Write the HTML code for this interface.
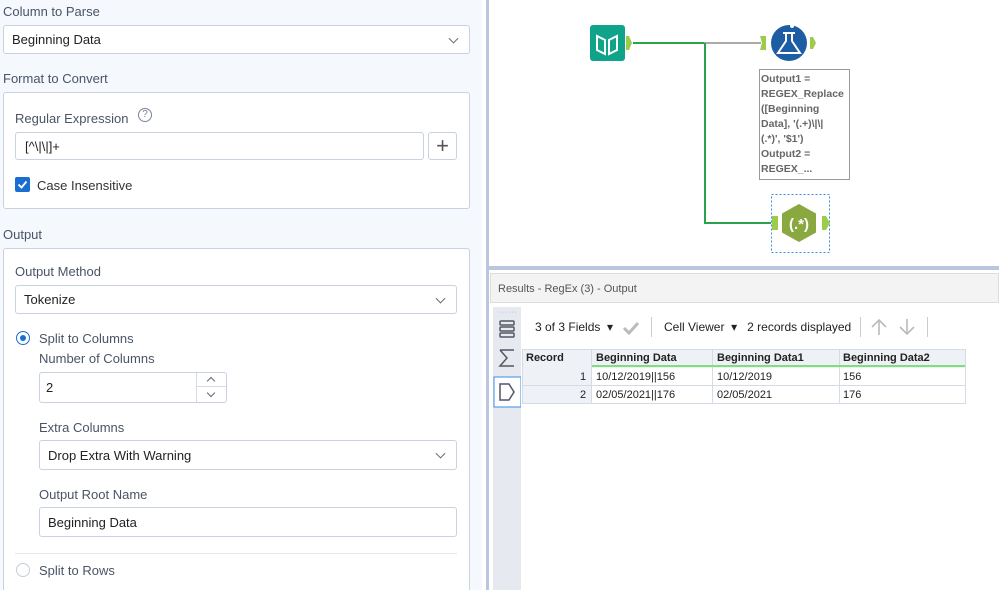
<!DOCTYPE html>
<html><head><meta charset="utf-8"><style>
*{box-sizing:border-box;margin:0;padding:0}
html,body{width:999px;height:590px;overflow:hidden}
body{font-family:"Liberation Sans",sans-serif;background:#fff;position:relative}
.abs{position:absolute}
.left{left:0;top:0;width:482px;height:590px;background:#f5f8fc}
.lbl{position:absolute;font-size:13px;color:#4a5466}
.box{position:absolute;background:#fff;border:1px solid #c9d2e0;border-radius:3px}
.sel{position:absolute;background:#fff;border:1px solid #c9d2e0;border-radius:3px;font-size:13px;color:#222;padding-left:8px;display:flex;align-items:center}
.chev{position:absolute;right:12px;top:50%;width:7px;height:7px;border-right:1.3px solid #667;border-bottom:1.3px solid #667;transform:translateY(-70%) rotate(45deg)}
.t{font-size:12px;color:#222}
</style></head><body>
<div class="abs left"></div>
<div class="abs" style="left:482px;top:0;width:4px;height:590px;background:#fff"></div>
<div class="abs" style="left:486px;top:0;width:3px;height:590px;background:#b9c6dd"></div>

<div class="lbl" style="left:3px;top:4px">Column to Parse</div>
<div class="sel" style="left:3px;top:25px;width:467px;height:29px">Beginning Data<span class="chev"></span></div>
<div class="lbl" style="left:3px;top:71px">Format to Convert</div>
<div class="box" style="left:3px;top:92px;width:467px;height:117px"></div>
<div class="lbl" style="left:15px;top:111px">Regular Expression</div>
<div class="abs" style="left:138px;top:108px;width:14px;height:14px;border:1.2px solid #7a8496;border-radius:50%;font-size:10px;color:#7a8496;text-align:center;line-height:12px">?</div>
<div class="sel" style="left:15px;top:132px;width:409px;height:28px;padding-left:9px">[^\|\|]+</div>
<div class="box" style="left:428px;top:132px;width:29px;height:28px;font-size:22px;color:#555;text-align:center;line-height:25px">+</div>
<div class="abs" style="left:15px;top:177px;width:15px;height:15px;background:#1b6ed1;border-radius:2px"><svg width="15" height="15"><path d="M3.5 7.5l3 3 5-6" stroke="#fff" stroke-width="1.8" fill="none"/></svg></div>
<div class="lbl" style="left:37px;top:178px;color:#333">Case Insensitive</div>

<div class="lbl" style="left:3px;top:227px">Output</div>
<div class="box" style="left:3px;top:248px;width:467px;height:350px"></div>
<div class="lbl" style="left:15px;top:264px">Output Method</div>
<div class="sel" style="left:15px;top:285px;width:442px;height:29px">Tokenize<span class="chev"></span></div>
<div class="abs" style="left:16px;top:331px;width:14px;height:14px;border:1.5px solid #1b6ed1;border-radius:50%"><div style="margin:2.5px;width:6px;height:6px;border-radius:50%;background:#1b6ed1"></div></div>
<div class="lbl" style="left:39px;top:331px">Split to Columns</div>
<div class="lbl" style="left:39px;top:351px">Number of Columns</div>
<div class="sel" style="left:39px;top:372px;width:188px;height:31px;padding-left:6px">2</div>
<div class="abs" style="left:196px;top:373px;width:30px;height:29px;border-left:1px solid #d5dbe6"><div style="height:14px;border-bottom:1px solid #d5dbe6"></div></div>
<div class="abs" style="left:208px;top:378px;width:6px;height:6px;border-left:1.2px solid #667;border-top:1.2px solid #667;transform:rotate(45deg)"></div>
<div class="abs" style="left:208px;top:390px;width:6px;height:6px;border-right:1.2px solid #667;border-bottom:1.2px solid #667;transform:rotate(45deg)"></div>
<div class="lbl" style="left:39px;top:420px">Extra Columns</div>
<div class="sel" style="left:39px;top:440px;width:418px;height:30px">Drop Extra With Warning<span class="chev"></span></div>
<div class="lbl" style="left:39px;top:487px">Output Root Name</div>
<div class="sel" style="left:39px;top:507px;width:418px;height:30px">Beginning Data</div>
<div class="abs" style="left:15px;top:553px;width:442px;height:1px;background:#e3e7ee"></div>
<div class="abs" style="left:16px;top:563px;width:14px;height:14px;border:1.2px solid #c5cdd9;border-radius:50%"></div>
<div class="lbl" style="left:39px;top:563px">Split to Rows</div>

<!-- canvas -->
<svg class="abs" style="left:489px;top:0" width="510" height="268">
<path d="M144 43H263" stroke="#2aa44a" stroke-width="2" fill="none"/>
<path d="M215 43H272" stroke="#aaa" stroke-width="2" fill="none"/>
<path d="M216 43V223H282" stroke="#2aa44a" stroke-width="2" fill="none"/>
<rect x="101" y="25" width="35" height="36" rx="3" fill="#0fa38a"/>
<path d="M108 36l8 4v14l-8-4zM128 36l-8 4v14l8-4z" fill="none" stroke="#fff" stroke-width="2"/>
<path d="M137 36h3l3 7-3 7h-3z" fill="#9ccc4a"/>
<path d="M271 36h6v14h-6l2-7z" fill="#9ccc4a"/>
<circle cx="300" cy="43" r="18" fill="#1c5da4"/>
<path d="M294 33h12M297 33v8l-8 12h22l-8-12v-8" fill="none" stroke="#fff" stroke-width="2"/>
<circle cx="303" cy="26" r="2" fill="#fff"/>
<path d="M321 37h3l3 6-3 6h-3z" fill="#9ccc4a"/>
<rect x="270.5" y="69.5" width="90" height="110" fill="#fff" stroke="#999"/>
<text font-family="Liberation Sans" font-size="10.5" font-weight="bold" fill="#666"><tspan x="272" y="82">Output1 =</tspan><tspan x="272" y="97">REGEX_Replace</tspan><tspan x="272" y="112">([Beginning</tspan><tspan x="272" y="127">Data], '(.+)\|\|</tspan><tspan x="272" y="142">(.*)', '$1')</tspan><tspan x="272" y="157">Output2 =</tspan><tspan x="272" y="172">REGEX_...</tspan></text>
<rect x="282.5" y="194.5" width="58" height="58" fill="none" stroke="#3a8ee6" stroke-dasharray="2,2"/>
<path d="M310 204l17 9.5v19l-17 9.5-17-9.5v-19z" fill="#8aa840"/>
<text x="310" y="229" font-family="Liberation Sans" font-size="15" font-weight="bold" fill="#fff" text-anchor="middle">(.*)</text>
<path d="M283 216h6v14h-6z" fill="#9ccc4a"/>
<path d="M333 216h4l4 7-4 7h-4z" fill="#9ccc4a"/>
</svg>
<div class="abs" style="left:489px;top:266px;width:510px;height:4px;background:#b9c6dd"></div>

<!-- results -->
<div class="abs" style="left:489px;top:270px;width:510px;height:320px;background:#fff"></div>
<div class="abs" style="left:490px;top:273px;width:509px;height:30px;background:#f3f3f3;border:1px solid #ddd;font-size:11px;color:#555;padding:9px 0 0 7px">Results - RegEx (3) - Output</div>
<div class="abs" style="left:493px;top:307px;width:28px;height:283px;background:#e6eaf0"></div>
<div class="abs" style="left:498px;top:309px;font-size:7px;color:#999;letter-spacing:1px">······</div>
<svg class="abs" style="left:493px;top:316px" width="28" height="92">
<rect x="7" y="5" width="14" height="4" rx="1" fill="none" stroke="#556" stroke-width="1.5"/><rect x="7" y="11" width="14" height="4" rx="1" fill="none" stroke="#556" stroke-width="1.5"/><rect x="7" y="17" width="14" height="4" rx="1" fill="none" stroke="#556" stroke-width="1.5"/>
<path d="M7 34h14M7 34l7 8-7 8h14" fill="none" stroke="#556" stroke-width="1.5"/>
<rect x="1" y="61" width="27" height="30" fill="#fff" stroke="#3a8ee6"/>
<path d="M7 68h9l5 8-5 8h-9z" fill="none" stroke="#556" stroke-width="1.5"/>
</svg>
<div class="abs t" style="left:535px;top:320px">3 of 3 Fields &nbsp;▾</div>
<svg class="abs" style="left:622px;top:321px" width="18" height="14"><path d="M2 7l5 5 9-10" stroke="#bbb" stroke-width="3" fill="none"/></svg>
<div class="abs" style="left:651px;top:317px;width:1px;height:20px;background:#ccc"></div>
<div class="abs t" style="left:664px;top:320px">Cell Viewer &nbsp;▾ &nbsp;&nbsp;2 records displayed</div>
<div class="abs" style="left:860px;top:317px;width:1px;height:20px;background:#ccc"></div>
<div class="abs" style="left:927px;top:317px;width:1px;height:20px;background:#ccc"></div>
<svg class="abs" style="left:870px;top:318px" width="50" height="18"><path d="M9 17V2M2 9l7-7 7 7M37 1v15M30 9l7 7 7-7" stroke="#bbb" stroke-width="1.6" fill="none"/></svg>

<div class="abs" style="left:522px;top:349px;width:444px;height:55px;background:#eef1f5;border:1px solid #d5dbe4"></div>
<div class="abs t" style="left:526px;top:352px;font-weight:bold;font-size:11px">Record</div>
<div class="abs" style="left:591px;top:349px;width:1px;height:55px;background:#d5dbe4"></div>
<div class="abs" style="left:712px;top:349px;width:1px;height:55px;background:#d5dbe4"></div>
<div class="abs" style="left:839px;top:349px;width:1px;height:55px;background:#d5dbe4"></div>
<div class="abs" style="left:592px;top:365px;width:373px;height:2px;background:#7de07d"></div>
<div class="abs t" style="left:596px;top:352px;font-weight:bold;font-size:11px">Beginning Data</div>
<div class="abs t" style="left:717px;top:352px;font-weight:bold;font-size:11px">Beginning Data1</div>
<div class="abs t" style="left:843px;top:352px;font-weight:bold;font-size:11px">Beginning Data2</div>
<div class="abs" style="left:592px;top:368px;width:373px;height:17px;background:#fff"></div>
<div class="abs" style="left:592px;top:386px;width:373px;height:17px;background:#fff"></div>
<div class="abs" style="left:523px;top:385px;width:442px;height:1px;background:#d5dbe4"></div>
<div class="abs" style="left:712px;top:368px;width:1px;height:35px;background:#d5dbe4"></div>
<div class="abs" style="left:839px;top:368px;width:1px;height:35px;background:#d5dbe4"></div>
<div class="abs t" style="left:580px;top:371px;font-size:11px">1</div>
<div class="abs t" style="left:596px;top:371px;font-size:11px">10/12/2019||156</div>
<div class="abs t" style="left:717px;top:371px;font-size:11px">10/12/2019</div>
<div class="abs t" style="left:843px;top:371px;font-size:11px">156</div>
<div class="abs t" style="left:580px;top:389px;font-size:11px">2</div>
<div class="abs t" style="left:596px;top:389px;font-size:11px">02/05/2021||176</div>
<div class="abs t" style="left:717px;top:389px;font-size:11px">02/05/2021</div>
<div class="abs t" style="left:843px;top:389px;font-size:11px">176</div>
</body></html>
